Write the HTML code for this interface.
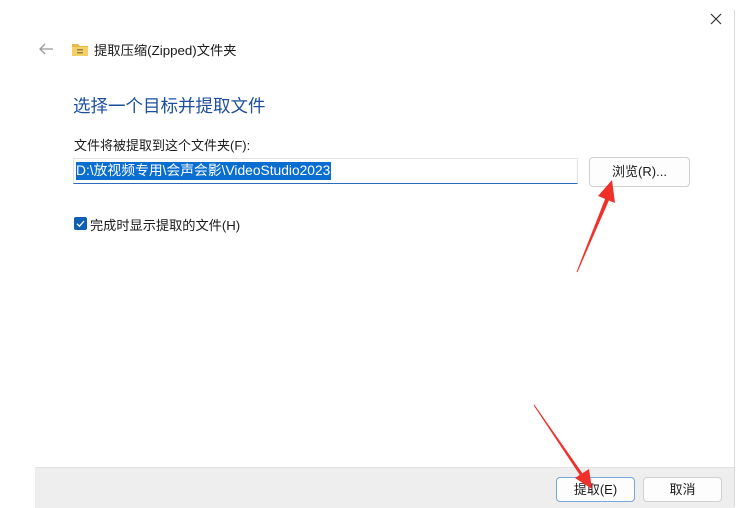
<!DOCTYPE html>
<html><head><meta charset="utf-8"><style>
body{margin:0;width:748px;height:507px;background:#fff;position:relative;overflow:hidden;font-family:"Liberation Sans","Noto Sans CJK SC",sans-serif;color:#1a1a1a}
.a{position:absolute;white-space:nowrap}
.btn{position:absolute;background:#fdfdfd;border:1px solid #d0d0d0;border-radius:4px;box-sizing:border-box;font-size:13px;text-align:center}
</style></head><body>
<div class="a" style="left:734px;top:10px;width:1px;height:497px;background:#d9d9d9"></div>
<svg class="a" style="left:708px;top:11px" width="16" height="16"><path d="M3 3L13 13M13 3L3 13" stroke="#333" stroke-width="1.2"/></svg>
<svg class="a" style="left:38px;top:42px" width="16" height="14"><path d="M15 7H2M7 2L2 7L7 12" stroke="#999" stroke-width="1.3" fill="none"/></svg>
<svg class="a" style="left:72px;top:43px" width="16" height="13"><path d="M0 1h6l2 2h8v10H0z" fill="#e6b94c"/><rect x="0" y="4" width="16" height="9" fill="#f4cf65"/><rect x="5" y="6" width="6" height="1.5" fill="#9a8650"/><rect x="5" y="9" width="6" height="1.5" fill="#9a8650"/></svg>
<div class="a" style="left:94px;top:40px;font-size:13.3px">提取压缩(Zipped)文件夹</div>
<div class="a" style="left:73px;top:93px;font-size:17.5px;color:#1c4e9c">选择一个目标并提取文件</div>
<div class="a" style="left:74px;top:135px;font-size:13px">文件将被提取到这个文件夹(F):</div>
<div class="a" style="left:73px;top:158px;width:505px;height:26px;border:1px solid #e2e2e2;border-bottom:1.5px solid #2a6bbf;box-sizing:border-box"></div>
<div class="a" style="left:76px;top:162px;height:18px;line-height:18px;background:#0a6ed1;color:#fff;font-size:13.8px;padding-right:1px">D:\放视频专用\会声会影\VideoStudio2023</div>
<div class="btn" style="left:589px;top:157px;width:101px;height:30px;line-height:28px">浏览(R)...</div>
<div class="a" style="left:74px;top:217px;width:13px;height:13px;background:#0f5fb3;border-radius:2px"></div>
<svg class="a" style="left:74px;top:217px" width="13" height="13"><path d="M3 6.8L5.5 9.2L10 4" stroke="#fff" stroke-width="1.3" fill="none"/></svg>
<div class="a" style="left:90px;top:215px;font-size:13.2px">完成时显示提取的文件(H)</div>
<div class="a" style="left:35px;top:467px;width:699px;height:40px;background:#eeeeee;border-top:1px solid #e2e2e2"></div>
<div class="btn" style="left:556px;top:477px;width:79px;height:25px;line-height:23px;border-color:#7ba6d6">提取(E)</div>
<div class="btn" style="left:643px;top:477px;width:79px;height:25px;line-height:23px">取消</div>
<svg class="a" style="left:0;top:0" width="748" height="507">
<path d="M577 272L606 198L609 199Z" fill="#f0302a" stroke="#f0302a" stroke-width="1"/>
<path d="M612 180L615 203L598 196Z" fill="#f0302a"/>
<path d="M534 405L583 475L581 476Z" fill="#f0302a" stroke="#f0302a" stroke-width="1"/>
<path d="M592 489L575 478L589 469Z" fill="#f0302a"/>
</svg>
</body></html>
